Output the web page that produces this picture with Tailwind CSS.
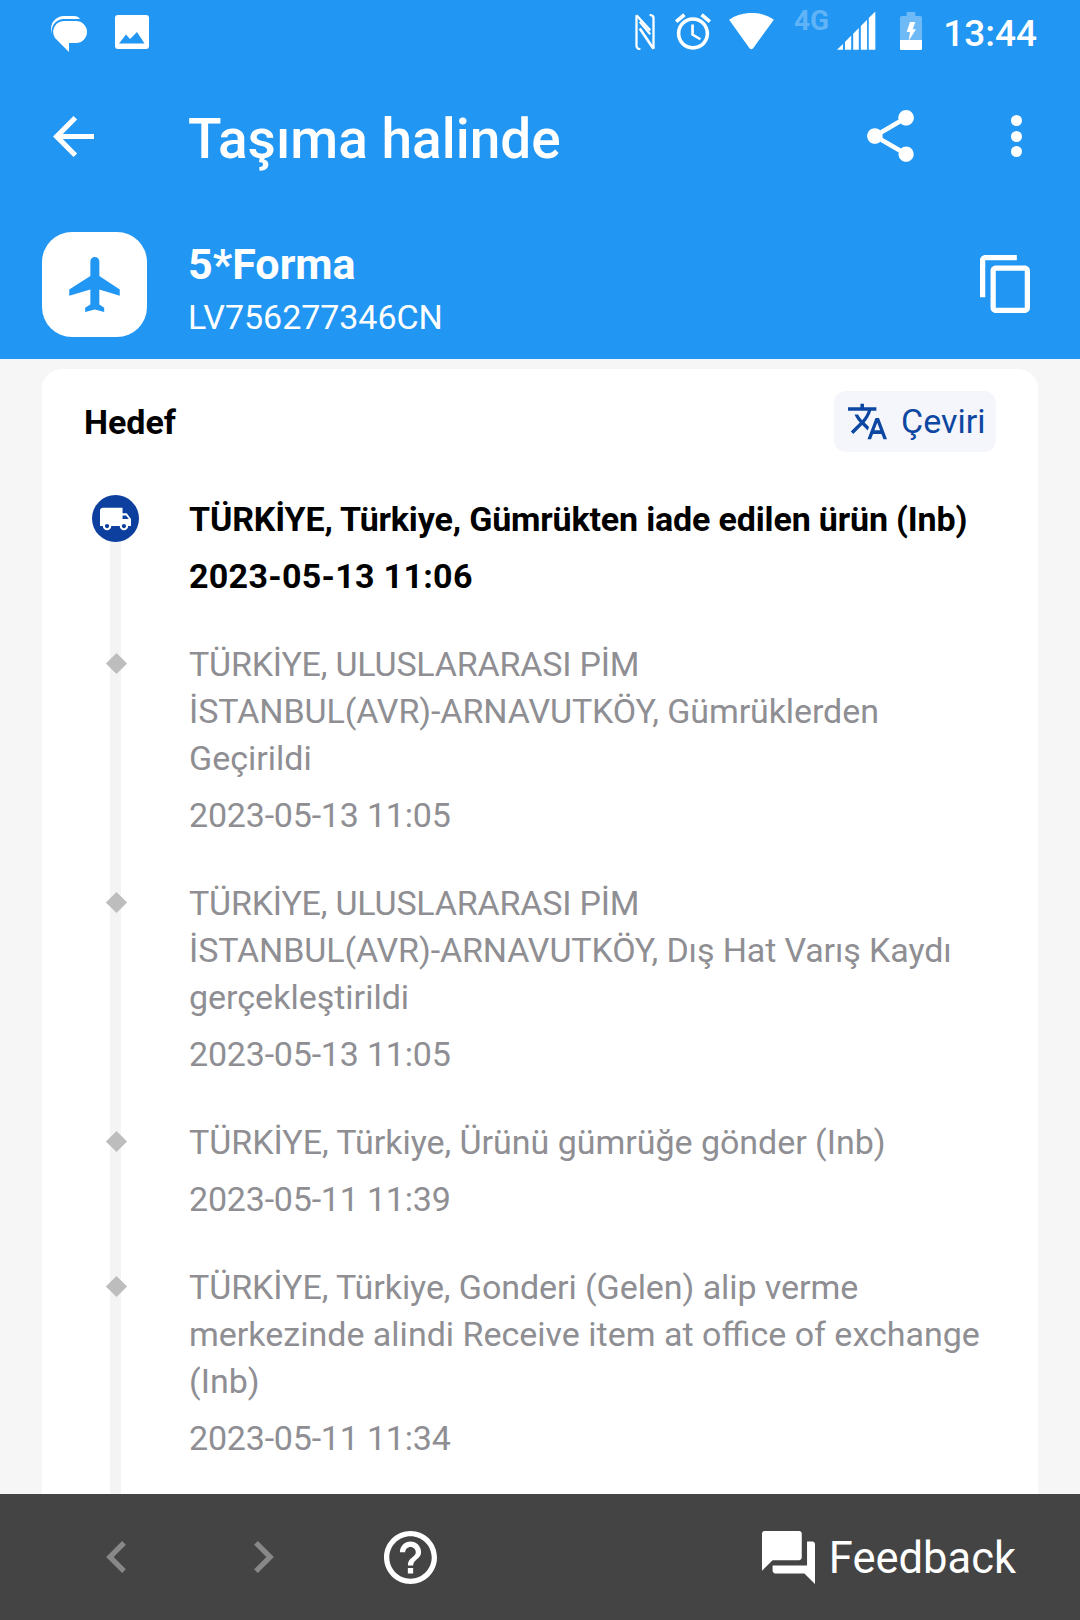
<!DOCTYPE html>
<html>
  <head>
    <meta charset="utf-8" />
    <title>Taşıma halinde</title>
    <meta name="viewport" content="width=device-width, initial-scale=1" />
    <script src="https://cdn.jsdelivr.net/npm/@tailwindcss/browser@4"></script>
  </head>
  <body>
    <div class="flex h-[1620px] w-[1080px] flex-col overflow-hidden bg-[#f6f6f6] font-[Roboto,sans-serif]">
      <!-- status bar -->
      <div class="flex h-[72px] shrink-0 bg-[#2196f3] text-white">
        <div class="ml-[50px] flex items-start pt-[15px]">
          <svg class="h-[37px] w-[37px]" viewBox="0 0 37 37" fill="#fff">
            <path d="M1 14A13 13 0 0 1 14 1H24Q28 1 30 4H13A12 12 0 0 0 2 19Q1 17 1 14Z" />
            <path d="M14 6H26A11 11 0 0 1 26 28H19V37L5 23A11 11 0 0 1 14 6Z" />
          </svg>
          <svg class="ml-[28px] h-[34px] w-[34px]" viewBox="0 0 34 34">
            <rect width="34" height="34" rx="3" fill="#fff" />
            <polygon points="4,28.5 11,19.5 15,24 22,17 29.5,28.5" fill="#2196f3" />
          </svg>
        </div>
        <div class="ml-auto flex items-start pr-[43px]">
          <svg class="mt-[14px] h-[36px] w-[20px]" viewBox="0 0 60 110" fill="none" stroke="#fff" stroke-width="7">
            <path d="M4 4V98Q4 107 16 108" />
            <path d="M4 4L46 50" />
            <path d="M14 44L56 106" stroke-width="8" />
            <path d="M14 24L46 62" />
            <path d="M56 106V12Q56 4 44 3" />
          </svg>
          <svg class="ml-[20px] mt-[13px] h-[37px] w-[36px]" viewBox="2 1.86 20 20.14" fill="#fff">
            <path d="M22 5.72l-4.6-3.86-1.29 1.53 4.6 3.86L22 5.72zM7.88 3.39L6.6 1.86 2 5.71l1.29 1.53 4.59-3.85zM12.5 8H11v6l4.75 2.85.75-1.23-4-2.37V8zM12 4c-4.97 0-9 4.03-9 9s4.03 9 9 9 9-4.03 9-9-4.03-9-9-9zm0 16c-3.87 0-7-3.13-7-7s3.13-7 7-7 7 3.13 7 7-3.13 7-7 7z" />
          </svg>
          <svg class="ml-[18px] mt-[13px] h-[37px] w-[45px]" viewBox="0 0 133 110" fill="#fff">
            <path d="M0 20C38 -7 95 -7 133 20L72 104Q66 111 60 104Z" />
          </svg>
          <span class="ml-[20px] mt-[5px] text-[28px] leading-[32px] font-bold text-white/30">4G</span>
          <svg class="ml-[8px] mt-[11px] h-[39px] w-[39px]" viewBox="0 0 118 117" fill="#fff">
            <polygon points="0,117 18,99 18,117" />
            <polygon points="24,93 43,74 43,117 24,117" />
            <polygon points="49,68 66,51 66,117 49,117" />
            <polygon points="72,45 91,26 91,117 72,117" />
            <polygon points="96,21 116,1 116,117 96,117" />
          </svg>
          <svg class="ml-[24px] mt-[12px] h-[38px] w-[22px]" viewBox="0 0 66 114">
            <path d="M20 0H46V12H60Q66 12 66 18V84H0V18Q0 12 6 12H20Z" fill="#fff" fill-opacity="0.35" />
            <path d="M0 84H66V110Q66 114 62 114H4Q0 114 0 110Z" fill="#fff" />
            <polygon points="30,30 46,30 38,52 48,52 26,86 30,60 20,60" fill="#fff" />
          </svg>
          <span class="ml-[21px] mt-[11px] text-[37px] leading-[45px] font-medium">13:44</span>
        </div>
      </div>

      <!-- title bar -->
      <div class="flex h-[128px] shrink-0 items-center bg-[#2196f3] text-white">
        <svg class="ml-[53px] h-[41px] w-[41px]" viewBox="4 4 16 16" fill="#fff">
          <path d="M20 11H7.83l5.59-5.59L12 4l-8 8 8 8 1.41-1.41L7.83 13H20v-2z" />
        </svg>
        <h1 class="ml-[94px] mt-[6px] text-[55px] leading-[64px] font-medium">Taşıma halinde</h1>
        <svg class="ml-auto h-[52px] w-[47px]" viewBox="3 2 18 20" fill="#fff">
          <path d="M18 16.08c-.76 0-1.44.3-1.96.77L8.91 12.7c.05-.23.09-.46.09-.7s-.04-.47-.09-.7l7.05-4.11c.54.5 1.25.81 2.04.81 1.66 0 3-1.34 3-3s-1.34-3-3-3-3 1.34-3 3c0 .24.04.47.09.7L8.04 9.81C7.5 9.31 6.79 9 6 9c-1.66 0-3 1.34-3 3s1.34 3 3 3c.79 0 1.5-.31 2.04-.81l7.12 4.16c-.05.21-.08.43-.08.65 0 1.61 1.31 2.92 2.92 2.92 1.61 0 2.92-1.31 2.92-2.92s-1.31-2.92-2.92-2.92z" />
        </svg>
        <div class="ml-[97px] mr-[58px] flex flex-col gap-[4.5px]">
          <span class="size-[11px] rounded-full bg-white"></span>
          <span class="size-[11px] rounded-full bg-white"></span>
          <span class="size-[11px] rounded-full bg-white"></span>
        </div>
      </div>

      <!-- parcel header -->
      <div class="flex h-[159px] shrink-0 items-start bg-[#2196f3] pl-[42px] text-white">
        <div class="mt-[32px] flex h-[105px] w-[105px] items-center justify-center rounded-[30px] bg-white">
          <svg class="h-[55px] w-[51px]" viewBox="201 143 146 159" fill="#2196f3">
            <path d="M262 156A13 13 0 0 1 288 156V198L347 237V255L288 237V280L302 290V302L275 295L247 302V290L262 280V237L201 255V237L262 198Z" />
          </svg>
        </div>
        <div class="ml-[41px] mt-[39px]">
          <div class="text-[43px] leading-[50px] font-bold">5*Forma</div>
          <div class="mt-[6px] text-[34px] leading-[44px] tracking-[-0.05px]">LV756277346CN</div>
        </div>
        <svg class="ml-auto mr-[50px] mt-[55px] h-[58px] w-[50px]" viewBox="2 1 19 22" fill="#fff">
          <path d="M16 1H4c-1.1 0-2 .9-2 2v14h2V3h12V1zm3 4H8c-1.1 0-2 .9-2 2v14c0 1.1.9 2 2 2h11c1.1 0 2-.9 2-2V7c0-1.1-.9-2-2-2zm0 16H8V7h11v14z" />
        </svg>
      </div>

      <!-- scroll area -->
      <div class="min-h-0 flex-1 overflow-hidden px-[42px] pt-[10px]">
        <div class="rounded-[20px] bg-white pb-[60px]">
          <div class="flex items-center justify-between pl-[42px] pr-[42px] pt-[22px]">
            <h2 class="text-[34px] leading-[40px] font-bold text-black">Hedef</h2>
            <button class="flex h-[61px] w-[162px] items-center rounded-[12px] bg-[#f4f6fb] pl-[14px] text-[34px] text-[#0d47a1]">
              <svg class="h-[37px] w-[39px]" viewBox="1 2 22 20" fill="#0d47a1">
                <path d="M12.87 15.07l-2.54-2.51.03-.03c1.74-1.94 2.98-4.17 3.71-6.53H17V4h-7V2H8v2H1v1.99h11.17C11.5 7.92 10.44 9.75 9 11.35 8.07 10.32 7.3 9.19 6.69 8h-2c.73 1.63 1.73 3.17 2.98 4.56l-5.09 5.02L4 19l5-5 3.11 3.11.76-2.04zM18.5 10h-2L12 22h2l1.12-3h4.75L21 22h2l-4.5-12zm-2.62 7l1.62-4.33L19.12 17h-3.24z" />
              </svg>
              <span class="ml-[14px]">Çeviri</span>
            </button>
          </div>

          <!-- tracking events -->
          <ul class="relative mt-[44px] flex flex-col gap-[41px] pl-[147px] pr-[20px] text-[34px] leading-[47px] text-[#8e8e93]">
            <span class="absolute bottom-[-60px] left-[68px] top-[20px] w-[11px] bg-[#f4f4f4]"></span>
            <li class="relative font-bold text-black">
              <span class="absolute left-[-97px] top-[-1px] flex size-[47px] items-center justify-center rounded-full bg-[#0d3f9f]">
                <svg class="h-[24px] w-[31px]" viewBox="1 4 22 16" fill="#fff">
                  <path d="M20 8h-3V4H3c-1.1 0-2 .9-2 2v11h2c0 1.66 1.34 3 3 3s3-1.34 3-3h6c0 1.66 1.34 3 3 3s3-1.34 3-3h2v-5l-3-4zM6 18.5c-.83 0-1.5-.67-1.5-1.5s.67-1.5 1.5-1.5 1.5.67 1.5 1.5-.67 1.5-1.5 1.5zm13.5-9l1.96 2.5H17V9.5h2.5zm-1.5 9c-.83 0-1.5-.67-1.5-1.5s.67-1.5 1.5-1.5 1.5.67 1.5 1.5-.67 1.5-1.5 1.5z" />
                </svg>
              </span>
              <p class="tracking-[-0.16px]">TÜRKİYE, Türkiye, Gümrükten iade edilen ürün (Inb)</p>
              <p class="mt-[10px] tracking-[0.3px]">2023-05-13 11:06</p>
            </li>
            <li class="relative">
              <span class="absolute left-[-80px] top-[15px] size-[15px] rotate-45 bg-[#bdbdbd]"></span>
              <p><span class="tracking-[-0.2px]">TÜRKİYE, ULUSLARARASI PİM</span><br /><span class="tracking-[-0.09px]">İSTANBUL(AVR)-ARNAVUTKÖY, Gümrüklerden</span><br />Geçirildi</p>
              <p class="mt-[10px] tracking-[-0.2px]">2023-05-13 11:05</p>
            </li>
            <li class="relative">
              <span class="absolute left-[-80px] top-[15px] size-[15px] rotate-45 bg-[#bdbdbd]"></span>
              <p><span class="tracking-[-0.2px]">TÜRKİYE, ULUSLARARASI PİM</span><br /><span class="tracking-[-0.12px]">İSTANBUL(AVR)-ARNAVUTKÖY, Dış Hat Varış Kaydı</span><br />gerçekleştirildi</p>
              <p class="mt-[10px] tracking-[-0.2px]">2023-05-13 11:05</p>
            </li>
            <li class="relative">
              <span class="absolute left-[-80px] top-[15px] size-[15px] rotate-45 bg-[#bdbdbd]"></span>
              <p class="tracking-[-0.03px]">TÜRKİYE, Türkiye, Ürünü gümrüğe gönder (Inb)</p>
              <p class="mt-[10px] tracking-[-0.2px]">2023-05-11 11:39</p>
            </li>
            <li class="relative">
              <span class="absolute left-[-80px] top-[15px] size-[15px] rotate-45 bg-[#bdbdbd]"></span>
              <p><span class="tracking-[-0.07px]">TÜRKİYE, Türkiye, Gonderi (Gelen) alip verme</span><br />merkezinde alindi Receive item at office of exchange<br />(Inb)</p>
              <p class="mt-[10px] tracking-[-0.2px]">2023-05-11 11:34</p>
            </li>
          </ul>
        </div>
      </div>

      <!-- bottom bar -->
      <div class="flex h-[126px] shrink-0 items-center bg-[#444444] text-white">
        <svg class="ml-[106px] h-[32px] w-[20px]" viewBox="8 6 7.41 12" fill="#888888">
          <path d="M15.41 7.41L14 6l-6 6 6 6 1.41-1.41L10.83 12z" />
        </svg>
        <svg class="ml-[128px] h-[32px] w-[20px]" viewBox="8.59 6 7.41 12" fill="#888888">
          <path d="M10 6L8.59 7.41 13.17 12l-4.58 4.59L10 18l6-6z" />
        </svg>
        <svg class="ml-[110px] h-[53px] w-[53px]" viewBox="2 2 20 20" fill="#fff">
          <path d="M11 18h2v-2h-2v2zm1-16C6.48 2 2 6.48 2 12s4.48 10 10 10 10-4.48 10-10S17.52 2 12 2zm0 18c-4.41 0-8-3.59-8-8s3.59-8 8-8 8 3.59 8 8-3.59 8-8 8zm0-14c-2.21 0-4 1.79-4 4h2c0-1.1.9-2 2-2s2 .9 2 2c0 2-3 1.75-3 5h2c0-2.25 3-2.5 3-5 0-2.21-1.79-4-4-4z" />
        </svg>
        <svg class="ml-auto h-[53px] w-[53px]" viewBox="2 2 20 20" fill="#fff">
          <path d="M21 6h-2v9H6v2c0 .55.45 1 1 1h11l4 4V7c0-.55-.45-1-1-1zm-4 6V3c0-.55-.45-1-1-1H3c-.55 0-1 .45-1 1v14l4-4h10c.55 0 1-.45 1-1z" />
        </svg>
        <span class="ml-[14px] mr-[64px] mt-[3px] text-[43.5px] leading-[52px]">Feedback</span>
      </div>
    </div>
  </body>
</html>
